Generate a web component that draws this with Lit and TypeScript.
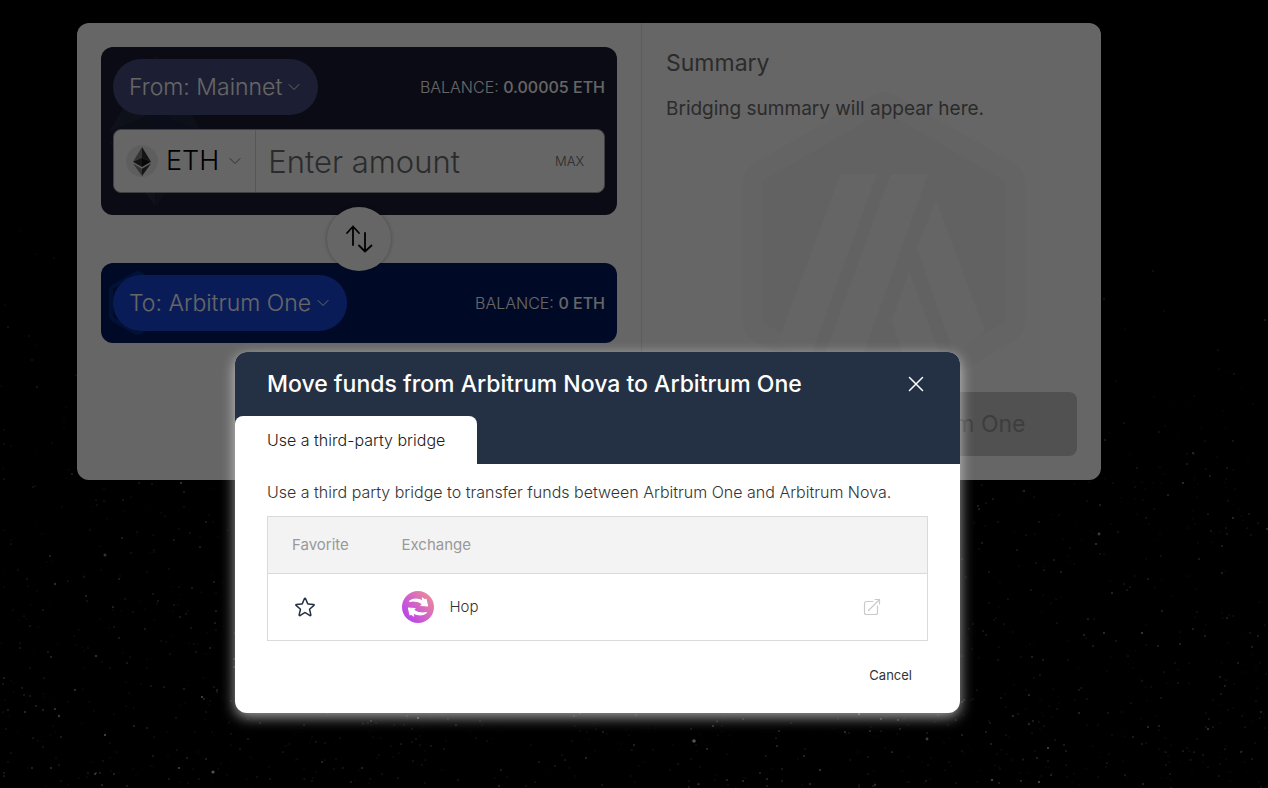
import { LitElement, html, css, svg } from "lit";
import { customElement, state } from "lit/decorators.js";

interface Star {
  x: number;
  y: number;
  r: number;
  o: number;
}

/** Seeded generator so the star field looks the same on every load. */
function makeStars(count: number): Star[] {
  let seed = 20231;
  const next = () => {
    seed = (seed * 1664525 + 1013904223) % 4294967296;
    return seed / 4294967296;
  };
  const stars: Star[] = [
    { x: 105, y: 555, r: 1.5, o: 0.5 },
    { x: 59, y: 716, r: 1.2, o: 0.55 },
    { x: 213, y: 772, r: 1.6, o: 0.8 },
    { x: 694, y: 741, r: 1.8, o: 0.8 },
    { x: 927, y: 739, r: 1.4, o: 0.6 },
    { x: 1099, y: 534, r: 1.4, o: 0.6 },
    { x: 992, y: 780, r: 1.3, o: 0.6 },
  ];
  for (let i = 0; i < count; i++) {
    const depth = Math.sqrt(next());
    const shine = next();
    stars.push({
      x: Math.round(next() * 1268),
      y: Math.round(200 + depth * 588),
      r: 0.5 + next() * 0.4,
      o: (0.14 + shine * shine * shine * 0.86) * (0.4 + depth * 0.6),
    });
  }
  return stars;
}

const STARS = makeStars(2300);

const chevron = html`<svg class="chevron" viewBox="0 0 12 12" aria-hidden="true">
  <path d="M1 3.5 6 8.5 11 3.5" fill="none" stroke="currentColor" stroke-linecap="round" stroke-linejoin="round" />
</svg>`;

@customElement("app-root")
export class AppRoot extends LitElement {
  @state() private favorite = false;

  static styles = css`
    :host {
      display: block;
      position: relative;
      min-height: 100vh;
      overflow: hidden;
      background: #000;
      color: #333;
      font-family: Inter, "Liberation Sans", sans-serif;
      font-size: 16px;
      font-weight: 300;
      line-height: 24px;
    }
    * { box-sizing: border-box; }
    h1, h2, p { margin: 0; font-weight: inherit; }
    button, input {
      font: inherit;
      color: inherit;
      border: 0;
      margin: 0;
      padding: 0;
      background: none;
    }
    button { cursor: pointer; }
    .stars {
      position: absolute;
      inset: 0;
      width: 100%;
      height: 100%;
    }
    .page {
      position: relative;
      isolation: isolate;
      padding: 23px 90px 23px 0;
    }
    .panel {
      display: grid;
      grid-template-columns: minmax(0, 564fr) minmax(0, 460fr);
      max-width: 1024px;
      min-height: 457px;
      margin: 0 auto;
      background: #fff;
      border-radius: 12px;
      overflow: hidden;
    }
    .transfer {
      display: flex;
      flex-direction: column;
      padding: 24px;
    }
    .card {
      position: relative;
      padding: 12px;
      border-radius: 12px;
      color: #fff;
    }
    .card-from { background: #1a1c33; padding-bottom: 22px; }
    .card-to { background: #001a62; }
    .mark { position: absolute; left: 8px; top: 8px; }
    .mark-eth { width: 93px; height: 152px; }
    .mark-arb { width: 57px; height: 64px; }
    .card-row {
      position: relative;
      display: flex;
      align-items: center;
      justify-content: space-between;
    }
    .network {
      display: flex;
      align-items: center;
      gap: 6px;
      height: 56px;
      padding: 0 18px 0 16px;
      border-radius: 28px;
      font-size: 23px;
      white-space: nowrap;
    }
    .network-from { background: #474b7f; }
    .network-to { background: #1b48dd; }
    .chevron { width: 12px; height: 12px; flex: none; }
    .balance { font-size: 16px; white-space: nowrap; }
    .balance strong { font-weight: 500; }
    .amount {
      position: relative;
      display: flex;
      height: 64px;
      margin-top: 14px;
      background: #fff;
      border: 1px solid #a0a0a0;
      border-radius: 8px;
      color: #000;
    }
    .token {
      display: flex;
      align-items: center;
      gap: 8px;
      padding: 0 14px 0 12px;
      border-right: 1px solid #dadada;
      font-size: 27px;
    }
    .token .chevron { color: #777; margin-left: 2px; }
    .token-icon { width: 32px; height: 32px; }
    .amount-input {
      flex: 1;
      min-width: 0;
      padding-left: 12px;
      font-size: 31px;
      outline: none;
    }
    .amount-input::placeholder { color: #6d6d6d; opacity: 1; }
    .max { padding: 0 20px; font-size: 13px; color: #6d6d6d; }
    .swap {
      position: relative;
      z-index: 1;
      display: grid;
      place-items: center;
      align-self: center;
      width: 64px;
      height: 64px;
      margin: -8px 0;
      border-radius: 50%;
      background: #fff;
      box-shadow: 0 0 4px rgba(0, 0, 0, 0.3);
      color: #000;
    }
    .swap svg { width: 28px; height: 28px; }
    .summary {
      position: relative;
      display: flex;
      flex-direction: column;
      padding: 24px;
      border-left: 1px solid #e5e5e5;
      color: #6d6d6d;
    }
    .summary-mark {
      position: absolute;
      left: 100px;
      top: 69px;
      width: 284px;
      height: 320px;
    }
    .summary h2 { position: relative; font-size: 23px; line-height: 32px; font-weight: 400; }
    .summary p { position: relative; margin-top: 16px; font-size: 19px; line-height: 28px; font-weight: 400; }
    .submit {
      position: relative;
      height: 64px;
      margin-top: auto;
      border-radius: 8px;
      background: #cacaca;
      color: #999;
      font-size: 23px;
      font-weight: 400;
    }
    .overlay {
      position: absolute;
      inset: 0;
      padding: 352px 73px 32px 0;
      background: rgba(0, 0, 0, 0.6);
    }
    .dialog {
      max-width: 725px;
      margin: 0 auto;
      background: #fff;
      border-radius: 12px;
      box-shadow: 0 4px 14px rgba(255, 255, 255, 0.65);
    }
    .dialog-top {
      background: #243145;
      border-radius: 12px 12px 0 0;
    }
    .dialog-head {
      display: flex;
      align-items: center;
      justify-content: space-between;
      height: 64px;
      padding: 0 32px;
      color: #fff;
    }
    .dialog-head h1 { font-size: 23px; font-weight: 500; }
    .close { display: grid; place-items: center; width: 24px; height: 24px; }
    .close svg { width: 16px; height: 16px; }
    .tab {
      height: 48px;
      padding: 0 32px;
      background: #fff;
      border-radius: 8px 8px 0 0;
      color: #202020;
      font-size: 16px;
    }
    .dialog-body { padding: 16px 32px 0; }
    .exchanges {
      width: 100%;
      margin-top: 12px;
      border: 1px solid #dadada;
      border-collapse: collapse;
      text-align: left;
    }
    .exchanges th {
      height: 57px;
      padding: 0 24px;
      background: #f3f3f3;
      color: #999;
      font-size: 15px;
      font-weight: 400;
    }
    .exchanges td { height: 67px; padding: 0 24px; border-top: 1px solid #dadada; }
    .col-favorite { width: 110px; }
    .col-link { width: 104px; }
    .star { display: block; padding: 0 1px; }
    .star svg { display: block; width: 24px; height: 24px; }
    .exchange { display: flex; align-items: center; gap: 16px; font-size: 15px; }
    .exchange svg { width: 32px; height: 32px; }
    .external { display: block; width: 18px; height: 18px; margin-left: 15px; color: #cacaca; }
    .external svg { display: block; }
    .dialog-foot {
      display: flex;
      justify-content: flex-end;
      padding: 16px 32px 20px;
    }
    .cancel { height: 36px; padding: 0 16px; font-size: 13px; font-weight: 400; }
  `;

  private stars() {
    return html`<svg class="stars" viewBox="0 0 1268 788" preserveAspectRatio="xMidYMax slice" aria-hidden="true">
      ${STARS.map((s) => svg`<circle cx=${s.x} cy=${s.y} r=${s.r} fill="#fff" opacity=${s.o} />`)}
    </svg>`;
  }

  private transfer() {
    return html`<section class="transfer">
      <div class="card card-from">
        <svg class="mark mark-eth" viewBox="0 0 93 152" aria-hidden="true">
          <path d="M46.500 0V57L0 77Z" fill="#252942" />
          <path d="M46.500 0V57L93 77Z" fill="#222640" />
          <path d="M0 77 46.500 57V104Z" fill="#20233a" />
          <path d="M93 77 46.500 57V104Z" fill="#1d2443" />
          <path d="M0 86 46.500 113V152Z" fill="#292c43" />
          <path d="M93 86 46.500 113V152Z" fill="#20233c" />
        </svg>
        <div class="card-row">
          <button class="network network-from">From: Mainnet ${chevron}</button>
          <div class="balance">BALANCE: <strong>0.00005 ETH</strong></div>
        </div>
        <div class="amount">
          <button class="token">
            <svg class="token-icon" viewBox="0 0 32 32" aria-hidden="true">
              <circle cx="16" cy="16" r="16" fill="#ececec" />
              <path d="M16 2V12.700L7 16.700Z" fill="#828384" />
              <path d="M16 2V12.700L25 16.700Z" fill="#343434" />
              <path d="M7 16.700 16 12.700V22Z" fill="#2f3030" />
              <path d="M25 16.700 16 12.700V22Z" fill="#131313" />
              <path d="M7 18.500 16 23.800V31Z" fill="#828384" />
              <path d="M25 18.500 16 23.800V31Z" fill="#343434" />
            </svg>
            ETH ${chevron}
          </button>
          <input class="amount-input" aria-label="Amount" placeholder="Enter amount" />
          <button class="max">MAX</button>
        </div>
      </div>
      <button class="swap" aria-label="Switch networks">
        <svg viewBox="0 0 28 28" fill="none" stroke="currentColor" stroke-width="1.800" stroke-linecap="round" stroke-linejoin="round" aria-hidden="true">
          <path d="M8 20V1.500M2 8 8 1.500 14 8M20 8V26.500M14 20.500 20 26.500 26.500 20.500" />
        </svg>
      </button>
      <div class="card card-to">
        <svg class="mark mark-arb" viewBox="0 0 57 64" aria-hidden="true">
          <path d="M28.500 0 32 1 54 14 57 18V46L54 50 32 63 28.500 64 25 63 3 50 0 46V18L3 14 25 1Z" fill="#052c88" />
          <path d="M28.500 4 53 18V46L28.500 60 4 46V18Z" fill="#001a5a" />
        </svg>
        <div class="card-row">
          <button class="network network-to">To: Arbitrum One ${chevron}</button>
          <div class="balance">BALANCE: <strong>0 ETH</strong></div>
        </div>
      </div>
    </section>`;
  }

  private summary() {
    return html`<section class="summary">
      <svg class="summary-mark" viewBox="0 0 284 320" aria-hidden="true">
        <path d="M142 0Q148 0 153 3L272 71Q284 79 284 92V228Q284 241 272 249L153 317Q142 323 131 317L12 249Q0 241 0 228V92Q0 79 12 71L131 3Q136 0 142 0Z" fill="#fafafa" />
        <path d="M142 19 263 89V230L142 300 20 230V89Z" fill="#f5f5f5" />
        <path d="M101 82H135L67 268 36 250 98 84Q99 82 101 82Z" fill="#fdfdfd" />
        <path d="M151 82H186L113 285 80 271 148 84Q149 82 151 82Z" fill="#fdfdfd" />
        <path d="M193 111Q194 109 195 111L243 240 212 262 175 156Z" fill="#fdfdfd" />
        <path d="M166 182Q167 180 168 182L200 268 168 286 150 228Z" fill="#fdfdfd" />
      </svg>
      <h2>Summary</h2>
      <p>Bridging summary will appear here.</p>
      <button class="submit" disabled>Move funds to Arbitrum One</button>
    </section>`;
  }

  private dialog() {
    return html`<div class="overlay">
      <div class="dialog" role="dialog" aria-modal="true" aria-labelledby="dialog-title">
        <div class="dialog-top">
          <header class="dialog-head">
            <h1 id="dialog-title">Move funds from Arbitrum Nova to Arbitrum One</h1>
            <button class="close" aria-label="Close">
              <svg viewBox="0 0 16 16" fill="none" stroke="currentColor" stroke-width="1.500" stroke-linecap="round" aria-hidden="true">
                <path d="M1.500 1.500 14.500 14.500M14.500 1.500 1.500 14.500" />
              </svg>
            </button>
          </header>
          <div role="tablist">
            <button class="tab" role="tab" aria-selected="true">Use a third-party bridge</button>
          </div>
        </div>
        <div class="dialog-body">
          <p>Use a third party bridge to transfer funds between Arbitrum One and Arbitrum Nova.</p>
          <table class="exchanges">
            <thead>
              <tr>
                <th class="col-favorite">Favorite</th>
                <th>Exchange</th>
                <th class="col-link"></th>
              </tr>
            </thead>
            <tbody>
              <tr>
                <td>
                  <button class="star" aria-label="Favorite Hop" aria-pressed=${this.favorite} @click=${() => (this.favorite = !this.favorite)}>
                    <svg viewBox="0 0 24 24" fill=${this.favorite ? "#243145" : "none"} stroke="#243145" stroke-width="1.500" stroke-linejoin="round" aria-hidden="true">
                      <path d="M11.480 3.499a.562.562 0 0 1 1.040 0l2.125 5.111a.563.563 0 0 0 .475.345l5.518.442c.499.040.701.663.321.988l-4.204 3.602a.563.563 0 0 0-.182.557l1.285 5.385a.562.562 0 0 1-.840.610l-4.725-2.885a.563.563 0 0 0-.586 0L6.982 20.540a.562.562 0 0 1-.840-.610l1.285-5.386a.562.562 0 0 0-.182-.557l-4.204-3.602a.563.563 0 0 1 .321-.988l5.518-.442a.563.563 0 0 0 .475-.345L11.480 3.500Z" />
                    </svg>
                  </button>
                </td>
                <td>
                  <div class="exchange">
                    <svg viewBox="1 1 32 32" aria-hidden="true">
                      <defs>
                        <linearGradient id="hop" x1="0.100" y1="0.900" x2="0.900" y2="0.200">
                          <stop offset="0" stop-color="#b840f0" />
                          <stop offset="1" stop-color="#e8879f" />
                        </linearGradient>
                      </defs>
                      <circle cx="17" cy="17" r="16" fill="url(#hop)" />
                      <g fill="#fff" stroke="#fff" stroke-width="1.200" stroke-linecap="round" stroke-linejoin="round">
                        <path d="M8.700 11.300C12 8.500 17 8.500 22 11L21.300 8 23.500 9.800 25 9.200 26.500 16 20 15.500 22 14C18 11.200 13 10.600 8.700 11.300Z" />
                        <path d="M25.300 22.700C22 25.500 17 25.500 12 23L12.700 26 10.500 24.200 9 24.800 7.500 18 14 18.500 12 20C16 22.800 21 23.400 25.300 22.700Z" />
                      </g>
                    </svg>
                    <span>Hop</span>
                  </div>
                </td>
                <td>
                  <a class="external" href="#hop" aria-label="Open Hop">
                    <svg width="18" height="18" viewBox="0 0 18 18" fill="none" stroke="currentColor" stroke-width="1.200" stroke-linecap="round" stroke-linejoin="round" aria-hidden="true">
                      <path d="M10 3.500H3.500A2 2 0 0 0 1.500 5.500V14.500A2 2 0 0 0 3.500 16.500H12.500A2 2 0 0 0 14.500 14.500V8M5.500 12.500 16.500 1.500M12 1.500H16.500V6" />
                    </svg>
                  </a>
                </td>
              </tr>
            </tbody>
          </table>
        </div>
        <footer class="dialog-foot">
          <button class="cancel">Cancel</button>
        </footer>
      </div>
    </div>`;
  }

  render() {
    return html`
      ${this.stars()}
      <main class="page">
        <div class="panel">${this.transfer()} ${this.summary()}</div>
      </main>
      ${this.dialog()}
    `;
  }
}
